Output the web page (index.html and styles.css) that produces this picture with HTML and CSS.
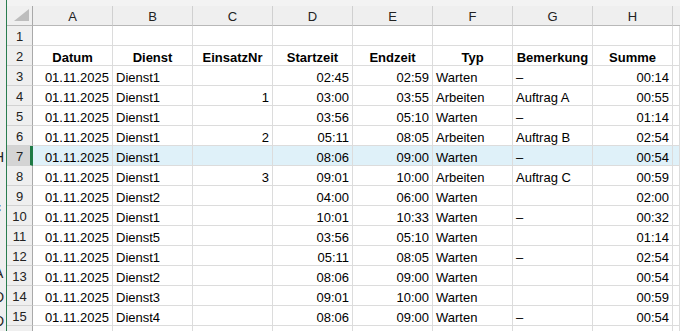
FILE: index.html
```html
<!DOCTYPE html>
<html lang="de">
<head>
<meta charset="utf-8">
<title>Tabelle</title>
<link rel="stylesheet" href="styles.css">
</head>
<body>
<div class="app">
  <div class="behind">
    <span class="ghost g1">H</span>
    <span class="ghost g2">c</span>
    <span class="ghost g3">l</span>
    <span class="ghost g4">A</span>
    <span class="ghost g5">D</span>
    <span class="ghost g6">D</span>
  </div>
  <div class="edge"></div>
  <div class="main">
    <div class="topstrip"></div>
    <div class="sheet">
      <div class="corner"><svg width="15" height="12" viewBox="0 0 15 12"><polygon points="15,0 15,12 0,12" fill="#bdbdbd"/></svg></div>
      <div class="colh">A</div><div class="colh">B</div><div class="colh">C</div><div class="colh">D</div><div class="colh">E</div><div class="colh">F</div><div class="colh">G</div><div class="colh">H</div><div class="colh last"></div>

      <div class="rowh">1</div><div class="c"></div><div class="c"></div><div class="c"></div><div class="c"></div><div class="c"></div><div class="c"></div><div class="c"></div><div class="c"></div><div class="c"></div>

      <div class="rowh">2</div><div class="c h">Datum</div><div class="c h">Dienst</div><div class="c h">EinsatzNr</div><div class="c h">Startzeit</div><div class="c h">Endzeit</div><div class="c h">Typ</div><div class="c h">Bemerkung</div><div class="c h">Summe</div><div class="c"></div>

      <div class="rowh">3</div><div class="c r">01.11.2025</div><div class="c">Dienst1</div><div class="c r"></div><div class="c r">02:45</div><div class="c r">02:59</div><div class="c">Warten</div><div class="c">–</div><div class="c r">00:14</div><div class="c"></div>

      <div class="rowh">4</div><div class="c r">01.11.2025</div><div class="c">Dienst1</div><div class="c r">1</div><div class="c r">03:00</div><div class="c r">03:55</div><div class="c">Arbeiten</div><div class="c">Auftrag A</div><div class="c r">00:55</div><div class="c"></div>

      <div class="rowh">5</div><div class="c r">01.11.2025</div><div class="c">Dienst1</div><div class="c r"></div><div class="c r">03:56</div><div class="c r">05:10</div><div class="c">Warten</div><div class="c">–</div><div class="c r">01:14</div><div class="c"></div>

      <div class="rowh">6</div><div class="c r">01.11.2025</div><div class="c">Dienst1</div><div class="c r">2</div><div class="c r">05:11</div><div class="c r">08:05</div><div class="c">Arbeiten</div><div class="c">Auftrag B</div><div class="c r">02:54</div><div class="c"></div>

      <div class="rowh sel">7</div><div class="c r hl">01.11.2025</div><div class="c hl">Dienst1</div><div class="c r hl"></div><div class="c r hl">08:06</div><div class="c r hl">09:00</div><div class="c hl">Warten</div><div class="c hl">–</div><div class="c r hl">00:54</div><div class="c hl"></div>

      <div class="rowh">8</div><div class="c r">01.11.2025</div><div class="c">Dienst1</div><div class="c r">3</div><div class="c r">09:01</div><div class="c r">10:00</div><div class="c">Arbeiten</div><div class="c">Auftrag C</div><div class="c r">00:59</div><div class="c"></div>

      <div class="rowh">9</div><div class="c r">01.11.2025</div><div class="c">Dienst2</div><div class="c r"></div><div class="c r">04:00</div><div class="c r">06:00</div><div class="c">Warten</div><div class="c"></div><div class="c r">02:00</div><div class="c"></div>

      <div class="rowh">10</div><div class="c r">01.11.2025</div><div class="c">Dienst1</div><div class="c r"></div><div class="c r">10:01</div><div class="c r">10:33</div><div class="c">Warten</div><div class="c">–</div><div class="c r">00:32</div><div class="c"></div>

      <div class="rowh">11</div><div class="c r">01.11.2025</div><div class="c">Dienst5</div><div class="c r"></div><div class="c r">03:56</div><div class="c r">05:10</div><div class="c">Warten</div><div class="c"></div><div class="c r">01:14</div><div class="c"></div>

      <div class="rowh">12</div><div class="c r">01.11.2025</div><div class="c">Dienst1</div><div class="c r"></div><div class="c r">05:11</div><div class="c r">08:05</div><div class="c">Warten</div><div class="c">–</div><div class="c r">02:54</div><div class="c"></div>

      <div class="rowh">13</div><div class="c r">01.11.2025</div><div class="c">Dienst2</div><div class="c r"></div><div class="c r">08:06</div><div class="c r">09:00</div><div class="c">Warten</div><div class="c"></div><div class="c r">00:54</div><div class="c"></div>

      <div class="rowh">14</div><div class="c r">01.11.2025</div><div class="c">Dienst3</div><div class="c r"></div><div class="c r">09:01</div><div class="c r">10:00</div><div class="c">Warten</div><div class="c"></div><div class="c r">00:59</div><div class="c"></div>

      <div class="rowh">15</div><div class="c r">01.11.2025</div><div class="c">Dienst4</div><div class="c r"></div><div class="c r">08:06</div><div class="c r">09:00</div><div class="c">Warten</div><div class="c">–</div><div class="c r">00:54</div><div class="c"></div>

      <div class="rowh">16</div><div class="c"></div><div class="c"></div><div class="c"></div><div class="c"></div><div class="c"></div><div class="c"></div><div class="c"></div><div class="c"></div><div class="c"></div>
    </div>
  </div>
</div>
</body>
</html>
```
FILE: styles.css
```css
html, body {
  margin: 0;
  padding: 0;
  background: #ffffff;
}
body {
  font-family: "Liberation Sans", Arial, sans-serif;
  font-size: 13px;
  color: #000;
  width: 680px;
  height: 331px;
  overflow: hidden;
}
.app {
  display: flex;
  height: 331px;
}
.behind {
  width: 6px;
  flex: none;
  background: #efefef;
  overflow: hidden;
  display: flex;
  flex-direction: column;
}
.ghost {
  display: block;
  font-size: 14px;
  line-height: 14px;
  height: 14px;
  width: 6px;
  text-indent: -6px;
  white-space: nowrap;
  color: #222;
}
.g1 { margin-top: 150px; }
.g2 { margin-top: 36px; }
.g3 { margin-top: 10px; }
.g4 { margin-top: 28px; }
.g5 { margin-top: 10px; }
.g6 { margin-top: 10px; }
.edge {
  width: 1px;
  flex: none;
  background: #2a7d4f;
}
.main {
  flex: 1;
  display: flex;
  flex-direction: column;
  min-width: 0;
}
.topstrip {
  height: 6px;
  background: #f3f3f3;
  flex: none;
}
.sheet {
  display: grid;
  grid-template-columns: 26px repeat(8, 80px) 1fr;
  grid-auto-rows: 20px;
}
.sheet > div {
  box-sizing: border-box;
  overflow: hidden;
  white-space: nowrap;
}
.corner {
  background: #efefef;
  border-right: 1px solid #a9a9a9;
  border-bottom: 1px solid #b8b8b8;
  display: flex;
  align-items: flex-end;
  justify-content: flex-end;
  padding: 0 3px 4px 0;
}
.corner svg { display: block; }
.colh {
  background: #efefef;
  border-right: 1px solid #d0d0d0;
  border-bottom: 1px solid #b8b8b8;
  text-align: center;
  padding-top: 3px;
  line-height: 15px;
  color: #222;
}
.colh.last { border-right: none; }
.rowh {
  background: #efefef;
  border-right: 1px solid #a9a9a9;
  border-bottom: 1px solid #d2d2d2;
  text-align: center;
  padding-top: 3px;
  line-height: 15px;
  color: #222;
}
.rowh.sel {
  background: #d4d4d4;
  border-right: 3px solid #1e7a45;
  padding-left: 2px;
}
.c {
  border-right: 1px solid #dcdcdc;
  border-bottom: 1px solid #dcdcdc;
  padding: 4px 3px 0 3px;
  line-height: 15px;
  text-align: left;
}
.c.r { text-align: right; }
.c.h {
  font-weight: bold;
  text-align: center;
}
.c.hl { background: #dff1f9; }
```
